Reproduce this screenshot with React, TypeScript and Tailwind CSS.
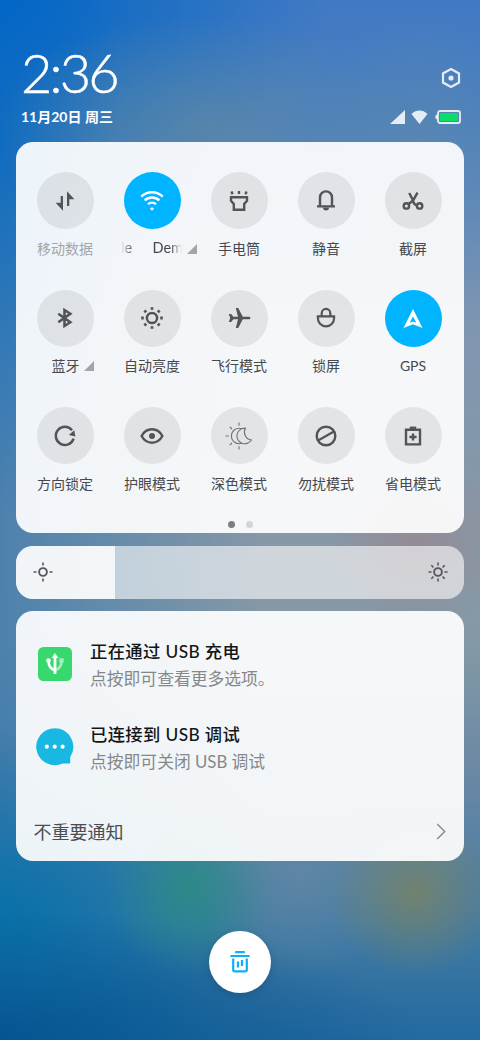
import clsx from "clsx";
import { ReactNode } from "react";

type Tile = {
  label: string;
  icon: ReactNode;
  active?: boolean;
  disabled?: boolean;
  more?: boolean;
  marquee?: boolean;
};

const Icon = ({ children, size = 28 }: { children: ReactNode; size?: number }) => (
  <svg
    width={size}
    height={size}
    viewBox={`0 0 ${size} ${size}`}
    fill="none"
    stroke="currentColor"
    strokeWidth="2.2"
    className="shrink-0"
  >
    {children}
  </svg>
);

const Corner = ({ className }: { className?: string }) => (
  <svg width="10" height="10" viewBox="0 0 10 10" className={className}>
    <path d="M10 0v10H0z" fill="currentColor" />
  </svg>
);

const tiles: Tile[] = [
  {
    label: "移动数据",
    disabled: true,
    icon: (
      <Icon>
        <path
          d="M9.7 9H12v14.7L4.6 15.8h5.1zM18.3 19H16V4.3l7.4 7.9h-5.1z"
          fill="currentColor"
          stroke="none"
        />
      </Icon>
    ),
  },
  {
    label: "Demo",
    active: true,
    more: true,
    marquee: true,
    icon: (
      <Icon>
        <path
          d="M3.2 9.6a15.6 15.6 0 0 1 21.6 0M6.6 13.4a10.8 10.8 0 0 1 14.8 0M10 17.2a6 6 0 0 1 8 0"
          strokeWidth="2.4"
        />
        <path d="M14 23.8l-2-2.4a2.6 2.6 0 0 1 4 0z" fill="currentColor" stroke="none" />
      </Icon>
    ),
  },
  {
    label: "手电筒",
    icon: (
      <Icon>
        <path d="M6 10.3h16v3.4L19.2 17v5.7H8.8V17L6 13.7z" strokeWidth="2.4" />
        <path d="M6.4 4.6l1.2 2.6M14 4v3M21.6 4.6l-1.2 2.6" strokeWidth="2.4" />
      </Icon>
    ),
  },
  {
    label: "静音",
    icon: (
      <Icon>
        <path d="M8 19v-8.6a6 6 0 0 1 12 0V19M5 19.4h18" strokeWidth="2.4" />
        <path d="M11 20.5h6a3 3 0 0 1-6 0z" fill="currentColor" stroke="none" />
      </Icon>
    ),
  },
  {
    label: "截屏",
    icon: (
      <Icon>
        <g strokeWidth="2.4">
          <circle cx="7.4" cy="18.9" r="2.7" />
          <circle cx="20.6" cy="18.9" r="2.7" />
          <path d="M18.5 5.6l-4.2 7.6-4.9 4M10.2 6l3.8 7.2c.3 3 1.500 4.700 4 5.300" />
        </g>
      </Icon>
    ),
  },
  {
    label: "蓝牙",
    more: true,
    icon: (
      <Icon>
        <path d="M7.3 9.7l12 8.6-5.8 3.7V6l5.8 3.7-12 8.6" strokeWidth="2.6" />
      </Icon>
    ),
  },
  {
    label: "自动亮度",
    icon: (
      <Icon>
        <circle cx="14" cy="14" r="5.1" strokeWidth="2.5" />
        <path
          d="M14 3.2v2.6M14 22.2v2.6M3.2 14h2.6M22.2 14h2.6M6.4 6.4l1.8 1.8M19.8 19.8l1.8 1.8M6.4 21.6l1.8-1.8M19.8 8.2l1.8-1.8"
          strokeWidth="2.8"
        />
      </Icon>
    ),
  },
  {
    label: "飞行模式",
    icon: (
      <Icon>
        <path
          d="M25.4 14c0 .8-.6 1.3-1.4 1.3h-6.2L13.2 24h-2.4l2.2-8.7H8.4L6.2 18H3.8l1.4-4-1.4-4h2.4l2.2 2.7H13L10.8 4h2.4l4.6 8.7H24c.8 0 1.4.5 1.4 1.3z"
          fill="currentColor"
          stroke="none"
        />
      </Icon>
    ),
  },
  {
    label: "锁屏",
    icon: (
      <Icon>
        <path d="M5.9 12.3h16.2v1.9a8.1 8.1 0 0 1-16.2 0zM9.7 12V9.2a4.3 4.3 0 0 1 8.6 0V12" />
      </Icon>
    ),
  },
  {
    label: "GPS",
    active: true,
    icon: (
      <Icon>
        <path
          d="M14 5l9.5 19-9.5-3.8L4.5 24zM14 12.4l-3.3 6.4L14 17.4l3.3 1.4z"
          fill="currentColor"
          fillRule="evenodd"
          stroke="none"
        />
      </Icon>
    ),
  },
  {
    label: "方向锁定",
    icon: (
      <Icon>
        <path d="M22.6 16.6A9.1 9.1 0 1 1 21 8.2" strokeWidth="2.5" />
        <path d="M23.2 8.2l1.2 6.2-6.6-1.4z" fill="currentColor" stroke="none" />
      </Icon>
    ),
  },
  {
    label: "护眼模式",
    icon: (
      <Icon>
        <path
          d="M3.6 14C6 9.6 9.8 7.3 14 7.3S22 9.6 24.4 14C22 18.4 18.2 20.7 14 20.7S6 18.4 3.6 14z"
          strokeWidth="2.4"
        />
        <circle cx="14" cy="14" r="3" fill="currentColor" stroke="none" />
      </Icon>
    ),
  },
  {
    label: "深色模式",
    icon: (
      <Icon>
        <g strokeWidth="1.1" opacity=".8">
          <path d="M16.6 6.7a7.7 7.7 0 1 0 0 14.6" />
          <path d="M14 .6v3.2M14 24.2v3.2M.6 14h3.2M4.8 4.8L7 7M4.8 23.2L7 21" />
          <path d="M20.400 6.200a7.800 7.800 0 1 0 6 11.800 8 8 0 0 1-6-11.800z" />
        </g>
      </Icon>
    ),
  },
  {
    label: "勿扰模式",
    icon: (
      <Icon>
        <circle cx="14" cy="14" r="9.3" strokeWidth="2.4" />
        <path d="M6.5 18.3l15-8.6" />
      </Icon>
    ),
  },
  {
    label: "省电模式",
    icon: (
      <Icon>
        <path d="M7 7.7h14v14.7H7zM14 11.4v7.2M10.4 15h7.2" strokeWidth="2.4" />
        <path d="M10.8 4.6h6.4v3h-6.4z" fill="currentColor" stroke="none" />
      </Icon>
    ),
  },
];

const notifications = [
  {
    title: "正在通过 USB 充电",
    text: "点按即可查看更多选项。",
    icon: (
      <svg width="38" height="38" viewBox="0 0 38 38">
        <rect x="2" y="2" width="34" height="34" rx="5.5" fill="#37d86d" />
        <path d="M12.5 16c0 5 2.5 8 6.5 9.5" fill="none" stroke="#fff" strokeWidth="2.6" />
        <path
          d="M19 25.5c4-1.5 6.5-4.5 6.5-9.5"
          fill="none"
          stroke="#a5edbe"
          strokeWidth="2.6"
        />
        <path d="M19 29V12" stroke="#fff" strokeWidth="2.8" />
        <path d="M19 8l3.3 5h-6.6z" fill="#fff" />
        <circle cx="12.5" cy="15.5" r="2.3" fill="#fff" />
        <path d="M23.3 13.3h4.4v4.4h-4.4z" fill="#a5edbe" />
      </svg>
    ),
  },
  {
    title: "已连接到 USB 调试",
    text: "点按即可关闭 USB 调试",
    icon: (
      <svg width="38" height="38" viewBox="0 0 38 38">
        <path
          d="M18.7 .2a18.5 18.5 0 1 0 8 35.2h6.5c.8 0 1-.4 1-1v-5.5A18.5 18.5 0 0 0 18.7 .2z"
          fill="#19b8e2"
        />
        <g fill="#fff">
          <circle cx="10.8" cy="18.7" r="2.1" />
          <circle cx="18.7" cy="18.7" r="2.1" />
          <circle cx="26.6" cy="18.7" r="2.1" />
        </g>
      </svg>
    ),
  },
];

const QuickTile = ({ label, icon, active, disabled, more, marquee }: Tile) => (
  <div className="flex flex-col items-center">
    <div
      className={clsx(
        "flex size-[57px] items-center justify-center rounded-full",
        active ? "bg-[#00b4ff] text-white" : "bg-black/[0.075] text-[#525457]"
      )}
    >
      {icon}
    </div>
    <div
      className={clsx(
        "mt-[8px] flex h-[22px] w-full items-center justify-center text-[14px] whitespace-nowrap",
        disabled ? "text-[#a3a6a9]" : "text-[#46484b]"
      )}
    >
      {marquee ? (
        <div className="ml-[14px] flex w-[62px] shrink-0 justify-between text-[14.5px] [mask-image:linear-gradient(to_right,transparent,black_12px,black_49px,transparent_61px)]">
          <span>le</span>
          <span>Dem</span>
        </div>
      ) : (
        <span className={clsx(more && "ml-[15px]")}>{label}</span>
      )}
      {more && <Corner className="mt-px ml-[4px] shrink-0 text-[#a2a5a7]" />}
    </div>
  </div>
);

const StatusBar = () => (
  <header className="flex h-[142px] justify-between pr-[19px] pl-[21px] text-white">
    <div>
      <div className="mt-[41px] h-[64px] text-[54px] leading-[64px] font-light tracking-[-2.8px] [-webkit-text-stroke:0.5px_white]">
        2:36
      </div>
      <div className="mt-[2px] text-[14px] leading-[20px] font-bold">11月20日 周三</div>
    </div>
    <div className="flex flex-col items-end text-white/85">
      <svg width="20" height="22" viewBox="0 0 20 22" className="mt-[67px]">
        <path
          d="M10 2l8 4.5v9L10 20l-8-4.5v-9z"
          fill="none"
          stroke="currentColor"
          strokeWidth="2.2"
        />
        <circle cx="10" cy="11" r="2.6" fill="currentColor" />
      </svg>
      <div className="mt-[21px] flex items-center gap-[6px]">
        <svg width="15" height="14" viewBox="0 0 15 14">
          <path d="M15 0v14H0z" fill="currentColor" />
        </svg>
        <svg width="17" height="14" viewBox="0 0 17 14">
          <path d="M8.5 14L.5 4C3 1.6 5.500.5 8.500.5S14 1.600 16.500 4z" fill="currentColor" />
        </svg>
        <svg width="26" height="14" viewBox="0 0 26 14" className="ml-px">
          <rect
            x="3"
            y="1"
            width="22"
            height="12"
            rx="2"
            fill="none"
            stroke="currentColor"
            strokeWidth="1.8"
          />
          <path d="M2.5 4.5v5C1 9.5.3 8.5.3 7s.7-2.5 2.2-2.5z" fill="currentColor" />
          <path d="M5 3h18v8H5z" fill="#0cdc68" />
        </svg>
      </div>
    </div>
  </header>
);

const Brightness = () => (
  <section className="mx-4 mt-[12.5px] flex h-[53px] items-center overflow-hidden rounded-[17px] bg-white/60 text-[#54575b]">
    <div className="flex h-full w-[99px] items-center bg-white/80 pl-[16.5px]">
      <svg width="20" height="20" viewBox="0 0 20 20" fill="none" stroke="currentColor">
        <circle cx="10" cy="10" r="3.9" strokeWidth="1.9" />
        <path d="M10 .5v3M10 16.5v3M.5 10h3M16.5 10h3" strokeWidth="1.6" />
      </svg>
    </div>
    <svg
      width="20"
      height="20"
      viewBox="0 0 20 20"
      fill="none"
      stroke="currentColor"
      className="mr-[16.5px] ml-auto"
    >
      <circle cx="10" cy="10" r="3.9" strokeWidth="1.9" />
      <path
        d="M10 .5v3M10 16.5v3M.5 10h3M16.5 10h3M3.3 3.3l2.1 2.1M14.6 14.6l2.1 2.1M3.3 16.7l2.1-2.1M14.6 5.4l2.1-2.1"
        strokeWidth="1.6"
      />
    </svg>
  </section>
);

const App = () => {
  return (
    <main className="h-[1040px] w-[480px] overflow-hidden bg-[radial-gradient(circle_at_190px_890px,rgba(42,142,128,.8),transparent_85px),radial-gradient(circle_at_415px_893px,rgba(122,132,98,.8),transparent_85px),radial-gradient(circle_at_300px_870px,rgba(104,138,166,.6),transparent_110px),radial-gradient(circle_at_415px_540px,rgba(152,136,146,.8),transparent_90px),radial-gradient(ellipse_210px_110px_at_200px_125px,rgba(98,138,158,.6),transparent),radial-gradient(ellipse_110px_130px_at_420px_140px,rgba(98,138,168,.5),transparent),radial-gradient(ellipse_330px_190px_at_0px_0px,rgba(0,102,200,.9),transparent),radial-gradient(ellipse_120px_380px_at_0px_140px,rgba(0,104,194,.7),transparent),radial-gradient(ellipse_420px_130px_at_0px_1040px,rgba(0,80,140,.85),transparent),radial-gradient(ellipse_260px_190px_at_0px_920px,rgba(0,112,168,.85),transparent),linear-gradient(to_right,rgba(40,115,178,.6),transparent_55%),linear-gradient(to_bottom,#4179c4_0px,#4a80c0_120px,#8096b0_330px,#8798a6_560px,#8499a6_640px,#6485a4_800px,#437ba4_920px,#226aa0_1040px)] font-[Lato,'Noto_Sans_CJK_SC',sans-serif]">
      <StatusBar />

      <section className="mx-4 h-[391px] rounded-[17px] bg-white/92 pt-[30px]">
        <div className="ml-[5.5px] grid w-[435px] grid-cols-5 gap-y-[30.5px]">
          {tiles.map((tile) => (
            <QuickTile key={tile.label} {...tile} />
          ))}
        </div>
        <div className="mt-[27px] flex justify-center gap-[11px]">
          <span className="size-[7px] rounded-full bg-[#7c7e80]" />
          <span className="size-[7px] rounded-full bg-[#d3d5d6]" />
        </div>
      </section>

      <Brightness />

      <section className="mx-4 mt-[12px] h-[250px] rounded-[17px] bg-white/92">
        <div className="flex flex-col pt-[29px] pl-[20px]">
          {notifications.map((item) => (
            <div key={item.title} className="flex h-[83px] gap-[16px]">
              <div className="mt-[5px]">{item.icon}</div>
              <div className="-mt-px whitespace-nowrap">
                <h2 className="text-[17.3px] leading-[26px] font-medium tracking-[0.4px] text-[#141516]">
                  {item.title}
                </h2>
                <p className="text-[16.8px] leading-[28px] text-[#85888b]">{item.text}</p>
              </div>
            </div>
          ))}
        </div>
        <div className="mt-[12px] flex items-center justify-between pr-[18px] pl-[17.5px]">
          <span className="text-[18px] leading-[28px] text-[#4a4c4f]">不重要通知</span>
          <svg width="10" height="17" viewBox="0 0 10 17" fill="none">
            <path d="M1.2 1l7.5 7.5L1.2 16" stroke="#898c8f" strokeWidth="1.5" />
          </svg>
        </div>
      </section>

      <button
        type="button"
        className="mx-auto mt-[70px] flex size-[62px] items-center justify-center rounded-full bg-white text-[#0cb0f8] shadow-[0_2px_8px_rgba(0,0,0,0.15)]"
      >
        <svg width="20" height="24" viewBox="0 0 20 24" fill="none" stroke="currentColor">
          <path d="M6 2.2h8M1.2 6h17.6" strokeWidth="2.2" strokeLinecap="round" />
          <path
            d="M3.2 8.5v11.3c0 1 .5 1.5 1.5 1.5h10.6c1 0 1.5-.5 1.5-1.5V8.5"
            strokeWidth="2.2"
          />
          <path d="M8 11.5v6M12 10v6" strokeWidth="2.2" />
        </svg>
      </button>
    </main>
  );
};

export default App;
